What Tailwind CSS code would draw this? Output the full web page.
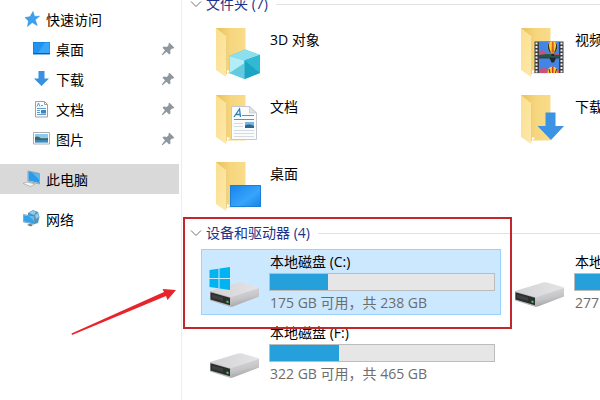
<!DOCTYPE html>
<html lang="zh-CN">

<head>
    <meta charset="UTF-8" />
    <meta name="viewport" content="width=device-width, initial-scale=1" />
    <title>此电脑</title>
    <script src="https://cdn.jsdelivr.net/npm/@tailwindcss/browser@4"></script>
</head>

<body class="relative flex min-h-screen overflow-hidden bg-white font-['Open_Sans','Noto_Sans_CJK_SC',sans-serif] text-sm text-black">
    <!-- shared icons -->
    <svg class="absolute size-0" aria-hidden="true">
        <defs>
            <linearGradient id="flap" x1="0" x2="1" y1="0" y2="1">
                <stop offset="0" stop-color="#fbdf8e" />
                <stop offset="1" stop-color="#fde9ad" />
            </linearGradient>
            <linearGradient id="back" x1="0" x2="1">
                <stop offset="0" stop-color="#e9c05c" />
                <stop offset="0.5" stop-color="#f6d67e" />
                <stop offset="1" stop-color="#f9dc8a" />
            </linearGradient>
            <linearGradient id="screen" x1="0" x2="1" y1="0" y2="1">
                <stop offset="0" stop-color="#1583ea" />
                <stop offset="0.6" stop-color="#37a5fb" />
                <stop offset="1" stop-color="#1480ea" />
            </linearGradient>
            <linearGradient id="metal" x1="0" x2="1">
                <stop offset="0" stop-color="#d3d3d6" />
                <stop offset="1" stop-color="#e4e4e7" />
            </linearGradient>
            <linearGradient id="side" x1="0" x2="0.300" y1="0" y2="1">
                <stop offset="0" stop-color="#dcdcdf" />
                <stop offset="0.6" stop-color="#c6c6c9" />
                <stop offset="1" stop-color="#a2a2a5" />
            </linearGradient>
        </defs>
        <symbol id="folder" viewBox="0 0 52 52">
            <path d="M7 1h29.500v45.500H17z" fill="url(#back)" />
            <path d="M7 1l11 9v36l-1 4-10-7z" fill="url(#flap)" />
            <path d="M18 43l3 1-3 3z" fill="#fff" />
            <path d="M17.500 10v37" stroke="#e8c56c" stroke-width="0.700" />
        </symbol>
        <symbol id="drive" viewBox="0 0 52 52">
            <path d="M1 34L29 25.500q2-.5 4 0L49 30q1.500.5 1 2L22 41z" fill="url(#metal)" />
            <path d="M21 40.500L50 31v8.500L24 49.500l-3 .5z" fill="url(#side)" />
            <path d="M1 34l20.500 6.200V50L1 43.500z" fill="#b9b9bc" />
            <path d="M1.500 35.200l19.500 5.500v7.500L1.500 42.500z" fill="#2b2e2e" />
            <path d="M3 37.500l11 3v3.500L3 41z" fill="#3c4140" />
            <path d="M17.500 43.500l2 .5v2l-2-.5z" fill="#4fd05d" />
        </symbol>
        <symbol id="pin" viewBox="0 0 14 14">
            <path d="M8.500.8L13.200 5.500l-1.200 1.200-1-.2L9.200 8.300l.3 3-1.300 1.200-2.700-2.700L1.500 13.300l-.8-.6 3.300-4.400L1.500 5.800l1.300-1.200 3 .3 1.900-1.800-.3-1.300z" fill="#8d979e" />
        </symbol>
    </svg>

    <!-- navigation pane -->
    <nav class="w-[182px] shrink-0 border-r border-[#ededed] pt-1">
        <a href="#" class="flex h-[30px] items-center gap-1.5 pl-[22px]">
            <svg class="size-[18px] shrink-0" viewBox="0 0 18 18">
                <path d="M11 1.500l1.500 5 5-.3-4.300 3.600 2 5.700-5-3-4.700 4 1-5.500L3 7.500l5-.8z" fill="#3ba1ee" stroke="#2488d8" stroke-width="0.500" />
            </svg>
            <span class="pt-0.5">快速访问</span>
        </a>
        <a href="#" class="flex h-[30px] items-center gap-1.5 pl-8">
            <svg class="size-[18px] shrink-0" viewBox="0 0 18 18">
                <path d="M1 2h17v12.500H1z" fill="#1177d2" />
                <path d="M1.500 2.500h16v10.500h-16z" fill="#2094f2" />
                <path d="M13 2.500h4.500V13H6z" fill="#3aa6fa" />
                <path d="M1.500 13.500h16" stroke="#0e5ca4" />
            </svg>
            <span class="pt-0.5">桌面</span>
            <svg class="mr-1.5 ml-auto size-3.5" aria-hidden="true"><use href="#pin" /></svg>
        </a>
        <a href="#" class="flex h-[30px] items-center gap-1.5 pl-8">
            <svg class="size-[18px] shrink-0" viewBox="0 0 18 18">
                <path d="M6.500 1h6V8.500H17l-7.500 7.500L2 8.500h4.500z" fill="#3a8fe0" />
            </svg>
            <span class="pt-0.5">下载</span>
            <svg class="mr-1.5 ml-auto size-3.5" aria-hidden="true"><use href="#pin" /></svg>
        </a>
        <a href="#" class="flex h-[30px] items-center gap-1.5 pl-8">
            <svg class="size-[18px] shrink-0" viewBox="0 0 18 18">
                <path d="M3.500 1.500h9l3 3v12.500h-12z" fill="#fbfcfd" stroke="#9aa1a7" />
                <path d="M12.500 1.500v3h3" fill="none" stroke="#9aa1a7" />
                <path d="M5 6.500L6.500 3 8 6.500M9 5.500h2M5 8.500h9M5 14.500h9M5 10.500h3M5 12.500h3" fill="none" stroke="#5a9fd0" />
                <path d="M9 10h5v3.500H9z" fill="#4085b8" />
            </svg>
            <span class="pt-0.5">文档</span>
            <svg class="mr-1.5 ml-auto size-3.5" aria-hidden="true"><use href="#pin" /></svg>
        </a>
        <a href="#" class="flex h-[30px] items-center gap-1.5 pl-8">
            <svg class="size-[18px] shrink-0" viewBox="0 0 18 18">
                <path d="M1.500 2.500h16V14h-16z" fill="#fff" stroke="#a9afb4" />
                <path d="M3 4h13v8.500H3z" fill="#8fc8f0" />
                <path d="M3 7q3-1.500 6 1.200 4 .4 7-.2v2H3z" fill="#3c6b5c" />
                <path d="M3 10h13v2.500H3z" fill="#3f87b8" />
            </svg>
            <span class="pt-0.5">图片</span>
            <svg class="mr-1.5 ml-auto size-3.5" aria-hidden="true"><use href="#pin" /></svg>
        </a>
        <a href="#" aria-current="page" class="mt-2.5 mr-0.5 flex h-[30px] items-center gap-1.5 bg-[#d9d9d9] pl-[22px]">
            <svg class="size-[18px] shrink-0" viewBox="0 0 18 18">
                <path d="M6 1l11.500 2.500V14L6 11z" fill="#e8edf0" stroke="#667681" stroke-width="0.600" />
                <path d="M6.500 1.500l10.500 2.300v9.200L6.500 10.500z" fill="#2b9be8" />
                <path d="M10 2.400l7 1.500v5.500z" fill="#5bb8f4" />
                <path d="M1 13.500l4-1.500 8 2-4.500 2.500z" fill="#f5f5f5" stroke="#9a9a9a" stroke-width="0.600" />
            </svg>
            <span class="pt-0.5">此电脑</span>
        </a>
        <a href="#" class="mt-2.5 flex h-[30px] items-center gap-1.5 pl-[22px]">
            <svg class="size-[18px] shrink-0" viewBox="0 0 18 18">
                <path d="M6 3l5-3 5 2 1.500 5-1.500 6-5 1.500-5-4z" fill="#4a96c4" />
                <path d="M7 3l4-2.500 3 1.500-2 3zM13 5l3-2 1 4-3 2z" fill="#93cbe2" />
                <path d="M1.500 4.500L12.500 6.500v7.500L1.500 12z" fill="#dfeaf0" stroke="#4b7690" stroke-width="0.600" />
                <path d="M2 5.200L12 7v6.400L2 11.500z" fill="#2ea3ee" />
                <path d="M7 6l5 1v4z" fill="#62bdf5" />
                <path d="M5 15l3-1.500 3 1.500-2 1.500z" fill="#70808a" />
            </svg>
            <span class="pt-0.5">网络</span>
        </a>
    </nav>

    <!-- file list -->
    <main class="-mt-1.5 min-w-0 flex-1 overflow-hidden pl-2">
        <h2 class="flex h-5 items-center text-[#1e3287]">
            <svg class="mr-1 size-3" viewBox="0 0 12 12" aria-hidden="true">
                <path d="M1 3.500l5 5 5-5" fill="none" stroke="#707070" />
            </svg>
            文件夹 (7)
            <span class="ml-2 h-px flex-1 bg-[#e2e2e2]"></span>
        </h2>
        <div class="mt-2.5 grid grid-cols-[300px_300px] gap-[5px] pl-[11px]">
            <button type="button" class="flex h-[62px] items-start gap-2 pt-[3px] pl-2 text-left">
                <svg class="size-[52px] shrink-0" viewBox="0 0 52 52">
                    <use href="#folder" />
                    <path d="M20.500 29L36 22.500 51 28v18L36 52l-15.500-6z" fill="#35bdd3" />
                    <path d="M20.500 29L36 22.500 51 28l-15.500 5.500z" fill="#8ddfee" />
                    <path d="M20.500 29l15 4.500V52l-15-6z" fill="#b3edf5" />
                    <path d="M20.500 46l15-10v16z" fill="#62cbe0" />
                    <path d="M35.500 33.500L51 28v18l-15.500 6z" fill="#1ba5c3" />
                    <path d="M35.500 33.500L51 28v18z" fill="#2fb9d2" />
                </svg>
                <span class="pt-[3px] pl-px">3D 对象</span>
            </button>
            <button type="button" class="flex h-[62px] items-start gap-2 pt-[3px] pl-2 text-left">
                <svg class="size-[52px] shrink-0" viewBox="0 0 52 52">
                    <use href="#folder" />
                    <path d="M20.500 14.500h29V46h-29z" fill="#3a3d42" />
                    <path d="M22.500 15.500V46M47.500 15.500V46" stroke="#f0f0f0" stroke-width="2" stroke-dasharray="2 1.500" />
                    <path d="M25 15h20v15H25zM25 31.500h20V46H25z" fill="#4285e6" />
                    <path d="M25 25l4-2 4 3 6 1h6v3H25z" fill="#c9527c" />
                    <path d="M25 28l8-1 12 1v2H25z" fill="#1f5a48" />
                    <path d="M25 43l5-3 5 3 10-1v4H25z" fill="#c9527c" />
                    <path d="M33.500 19.500q0-5 5-5t5 5q0 4-4 6.500h-2q-4-2.500-4-6.500z" fill="#f7cf3a" />
                    <path d="M35.500 15.500q-1.500 4 1.500 10h-1q-3-4-2-8zM41.500 15.500q1.500 4-1.500 10h1q3-4 2-8z" fill="#3b3220" />
                    <path d="M38 14.500h1.500l.5 11h-2.500z" fill="#de5a2a" />
                    <path d="M37.500 27h2.500v2h-2.500zM35.500 31h6.500l-2 4.500h-2.500z" fill="#26252b" />
                    <path d="M33.500 46q0-6.500 5-6.500t5 6.500z" fill="#f7c637" />
                    <path d="M38 39.500h1.500V46H38z" fill="#d8322a" />
                    <path d="M35 42l1 4M42.500 42l-1 4" stroke="#3b3220" />
                </svg>
                <span class="pt-[3px] pl-px">视频</span>
            </button>
            <button type="button" class="flex h-[62px] items-start gap-2 pt-[3px] pl-2 text-left">
                <svg class="size-[52px] shrink-0" viewBox="0 0 52 52">
                    <use href="#folder" />
                    <path d="M22.500 12.500h18l7 6.500v26.500h-25z" fill="#f9fbfc" stroke="#c3c9ce" />
                    <path d="M40.500 12.500V19h7z" fill="#dde2e6" stroke="#bcc3c8" stroke-width="0.600" />
                    <path d="M25 23l5.500-8 1 8M27 20.500h4" fill="none" stroke="#2582bd" stroke-width="1.300" />
                    <path d="M33 21.500h12M25 25.500h20" stroke="#4a9bc9" />
                    <path d="M25 29.500h9M25 32.500h9M25 36.500h20M25 39.500h20M25 42.500h20" stroke="#d5dade" />
                    <path d="M36 28h9v6h-9z" fill="#76b6df" />
                    <path d="M36 31.500q4-2 9 .5v2h-9z" fill="#2c678c" />
                </svg>
                <span class="pt-[3px] pl-px">文档</span>
            </button>
            <button type="button" class="flex h-[62px] items-start gap-2 pt-[3px] pl-2 text-left">
                <svg class="size-[52px] shrink-0" viewBox="0 0 52 52">
                    <use href="#folder" />
                    <path d="M31.500 18.500h10V32h8.500L37 46 23.500 32h8z" fill="#3b93e3" />
                </svg>
                <span class="pt-[3px] pl-px">下载</span>
            </button>
            <button type="button" class="flex h-[62px] items-start gap-2 pt-[3px] pl-2 text-left">
                <svg class="size-[52px] shrink-0" viewBox="0 0 52 52">
                    <use href="#folder" />
                    <path d="M21 24h31v22H21z" fill="url(#screen)" />
                    <path d="M21.500 24.500h30v21h-30z" fill="none" stroke="#1c7fd6" />
                </svg>
                <span class="pt-[3px] pl-px">桌面</span>
            </button>
        </div>

        <h2 class="mt-[3px] flex h-5 items-center text-[#1e3287]">
            <svg class="mr-1 size-3" viewBox="0 0 12 12" aria-hidden="true">
                <path d="M1 3.500l5 5 5-5" fill="none" stroke="#707070" />
            </svg>
            设备和驱动器 (4)
            <span class="ml-2 h-px flex-1 bg-[#e2e2e2]"></span>
        </h2>
        <div class="mt-1.5 grid grid-cols-[300px_300px] gap-[5px] pl-[11px]">
            <button type="button" class="flex h-[66px] items-start gap-2 border border-[#99d1ff] bg-[#cce8ff] pr-[5px] pl-[7px] text-left">
                <svg class="mt-[7px] size-[52px] shrink-0" viewBox="0 0 52 52">
                    <use href="#drive" />
                    <path d="M.5 13l9-1.300v9.300h-9zM10.500 11.500L21 10v11H10.500zM.5 22h9v9.300l-9-1.300zM10.500 22H21v11l-10.500-1.500z" fill="#00b4f1" />
                </svg>
                <span class="flex flex-1 flex-col pt-0.5">
                    <span class="pl-px">本地磁盘 (C:)</span>
                    <span class="mt-px h-[18px] border border-[#bcbcbc] bg-[#e6e6e6]">
                        <span class="block h-full bg-[#26a0da]" style="width: 26%"></span>
                    </span>
                    <span class="mt-0.5 pl-px text-[#6d6d6d]">175 GB 可用，共 238 GB</span>
                </span>
            </button>
            <button type="button" class="flex h-[66px] items-start gap-2 border border-transparent pr-[5px] pl-[7px] text-left">
                <svg class="mt-[7px] size-[52px] shrink-0"><use href="#drive" /></svg>
                <span class="flex flex-1 flex-col pt-0.5">
                    <span class="pl-px">本地磁盘 (D:)</span>
                    <span class="mt-px h-[18px] border border-[#bcbcbc] bg-[#e6e6e6]">
                        <span class="block h-full bg-[#26a0da]" style="width: 40%"></span>
                    </span>
                    <span class="mt-0.5 pl-px text-[#6d6d6d]">277 GB 可用，共 465 GB</span>
                </span>
            </button>
            <button type="button" class="flex h-[66px] items-start gap-2 border border-transparent pr-[5px] pl-[7px] text-left">
                <svg class="mt-[7px] size-[52px] shrink-0"><use href="#drive" /></svg>
                <span class="flex flex-1 flex-col pt-0.5">
                    <span class="pl-px">本地磁盘 (F:)</span>
                    <span class="mt-px h-[18px] border border-[#bcbcbc] bg-[#e6e6e6]">
                        <span class="block h-full bg-[#26a0da]" style="width: 31%"></span>
                    </span>
                    <span class="mt-0.5 pl-px text-[#6d6d6d]">322 GB 可用，共 465 GB</span>
                </span>
            </button>
        </div>
    </main>

    <!-- highlight box and arrow -->
    <div class="pointer-events-none absolute top-[217px] left-[183px] h-[112px] w-[329px] border-2 border-[#c1272d]"></div>
    <svg class="pointer-events-none absolute top-[286px] left-[70px] h-[50px] w-[108px]" viewBox="0 0 108 50">
        <path d="M1.500 47.500L94 6l-1.500-3 13.500 1-8.500 10-1.500-4L2 49z" fill="#e8232a" />
    </svg>
</body>

</html>
